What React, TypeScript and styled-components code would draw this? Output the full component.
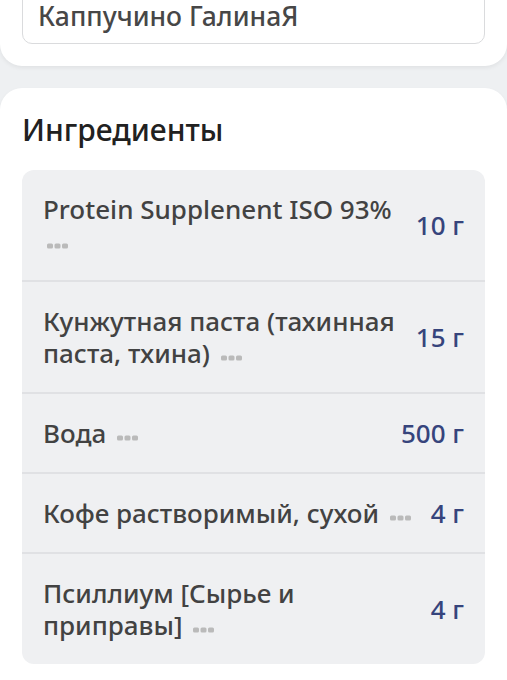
import styled, { createGlobalStyle } from 'styled-components';

const GlobalStyle = createGlobalStyle`
    html, body {
        margin: 0;
        padding: 0;
        background: #eef0f2;
        font-family: "Noto Sans", "Open Sans", sans-serif;
        overflow: hidden;
    }
`;

const Page = styled.div`
    display: flex;
    flex-direction: column;
    gap: 22px;
    width: 507px;
`;

const Card = styled.section<{ $top?: boolean }>`
    background: #ffffff;
    border-radius: 22px;
    padding: 22px 22px;
    margin-top: ${(p) => (p.$top ? '-34px' : '0')};
    box-shadow: 0 2px 4px rgba(0, 0, 0, 0.06);
`;

const NameInput = styled.div`
    height: 56px;
    box-sizing: border-box;
    border: 1px solid #dadbdd;
    border-radius: 10px;
    padding: 0 15px;
    display: flex;
    align-items: center;
    font-size: 26.5px;
    font-weight: 500;
    color: #474747;
`;

const Title = styled.h2`
    margin: 2px 0 22px;
    font-size: 30px;
    font-weight: 500;
    line-height: 36px;
    color: #212121;
`;

const List = styled.div`
    background: #eff0f2;
    border-radius: 12px;
    margin-bottom: 40px;
`;

const Row = styled.div`
    display: flex;
    align-items: center;
    gap: 18px;
    padding: 23px 21px;
    border-top: 2px solid #e0e1e4;

    &:first-child {
        border-top: none;
    }
`;

const Name = styled.div`
    flex: 1;
    font-size: 26px;
    font-weight: 500;
    line-height: 32px;
    color: #424242;
`;

const Amount = styled.div`
    font-size: 26px;
    font-weight: 500;
    line-height: 32px;
    color: #36447c;
    white-space: nowrap;
`;

const DotsWrap = styled.span`
    display: inline-block;
    margin-left: 4px;
    vertical-align: middle;
    line-height: 0;
`;

function Dots() {
    return (
        <DotsWrap>
            <svg width="21" height="6" viewBox="0 0 21 6">
                <rect x="0" y="0.5" width="6" height="5" rx="1.5" fill="#bababa" />
                <rect x="7.5" y="0.5" width="6" height="5" rx="1.5" fill="#bababa" />
                <rect x="15" y="0.5" width="6" height="5" rx="1.5" fill="#bababa" />
            </svg>
        </DotsWrap>
    );
}

const ingredients = [
    { name: 'Protein Supplenent ISO 93%', amount: '10 г' },
    { name: 'Кунжутная паста (тахинная паста, тхина)', amount: '15 г' },
    { name: 'Вода', amount: '500 г' },
    { name: 'Кофе растворимый, сухой', amount: '4 г' },
    { name: 'Псиллиум [Сырье и приправы]', amount: '4 г' },
];

export default function App() {
    return (
        <>
            <GlobalStyle />
            <Page>
                <Card $top>
                    <NameInput>Каппучино ГалинаЯ</NameInput>
                </Card>
                <Card>
                    <Title>Ингредиенты</Title>
                    <List>
                        {ingredients.map((item) => (
                            <Row key={item.name}>
                                <Name>
                                    {item.name} <Dots />
                                </Name>
                                <Amount>{item.amount}</Amount>
                            </Row>
                        ))}
                    </List>
                </Card>
            </Page>
        </>
    );
}
